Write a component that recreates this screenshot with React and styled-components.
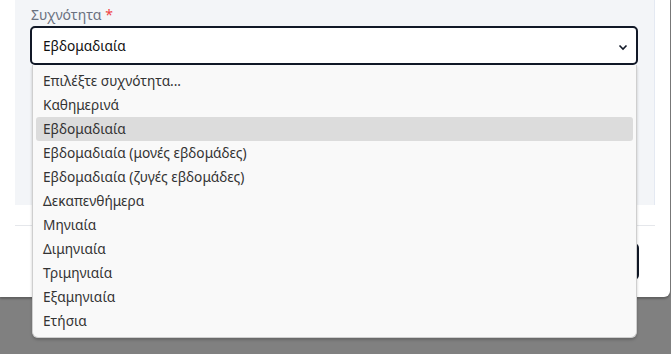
import React from 'react';
import styled, { createGlobalStyle } from 'styled-components';

const GlobalStyle = createGlobalStyle`
  html, body {
    margin: 0;
    padding: 0;
    background: #808080;
    font-family: "Noto Sans", "Open Sans", sans-serif;
  }
`;

const Page = styled.div`
  width: 671px;
  height: 354px;
  overflow: hidden;
  position: relative;
`;

const Modal = styled.div`
  width: 640px;
  height: 297px;
  padding: 0 15px;
  background: #ffffff;
  border-bottom-right-radius: 6px;
  box-shadow: 0 2px 2px rgba(0, 0, 0, 0.25);
  display: flex;
  flex-direction: column;
`;

const Panel = styled.div`
  height: 205px;
  box-sizing: border-box;
  background: #f3f5f8;
  border-right: 1px solid #e4e9f2;
  padding: 4px 16px 0 15px;
`;

const Label = styled.div`
  font-size: 14px;
  line-height: 22px;
  color: #6b7280;
  padding-left: 1px;
`;

const Required = styled.span`
  color: #ef4444;
`;

const Field = styled.div`
  position: relative;
`;

const SelectBox = styled.div`
  height: 39px;
  box-sizing: border-box;
  border: 2px solid #111827;
  border-radius: 5px;
  background: #ffffff;
  display: flex;
  align-items: center;
  justify-content: space-between;
  padding: 0 8px 0 11px;
  font-size: 13.7px;
  color: #111111;
`;

const Chevron = styled.svg`
  width: 10px;
  height: 10px;
  margin-top: 2px;
`;

const Dropdown = styled.ul`
  position: absolute;
  top: 39px;
  left: 2px;
  right: 1px;
  margin: 0;
  padding: 4px 3px 4px 3px;
  list-style: none;
  background: #f9f9f9;
  border: 1px solid #cfcfcf;
  border-top: none;
  border-radius: 0 0 6px 6px;
  box-shadow: 0 2px 3px rgba(0, 0, 0, 0.2);
  z-index: 2;
`;

const Option = styled.li`
  height: 24px;
  line-height: 24px;
  padding-left: 7px;
  font-size: 13.7px;
  color: #333333;
  border-radius: 3px;
  background: ${p => (p.$active ? '#dcdcdc' : 'transparent')};
`;

const Footer = styled.div`
  margin-top: 20px;
  border-top: 1px solid #e5e7eb;
  padding: 17px 16px 0 0;
  display: flex;
  justify-content: flex-end;
`;

const Button = styled.button`
  height: 37px;
  width: 120px;
  border: none;
  border-radius: 5px;
  background: #111827;
  color: #ffffff;
  font-family: inherit;
  font-size: 14px;
`;

const options = [
  'Επιλέξτε συχνότητα...',
  'Καθημερινά',
  'Εβδομαδιαία',
  'Εβδομαδιαία (μονές εβδομάδες)',
  'Εβδομαδιαία (ζυγές εβδομάδες)',
  'Δεκαπενθήμερα',
  'Μηνιαία',
  'Διμηνιαία',
  'Τριμηνιαία',
  'Εξαμηνιαία',
  'Ετήσια',
];

export default function App() {
  return (
    <>
      <GlobalStyle />
      <Page>
        <Modal>
          <Panel>
            <Label>
              Συχνότητα <Required>*</Required>
            </Label>
            <Field>
              <SelectBox>
                <span>Εβδομαδιαία</span>
                <Chevron viewBox="0 0 10 10">
                  <polyline points="1.5,3.5 5,7 8.5,3.5" fill="none" stroke="#111827" strokeWidth="1.6" />
                </Chevron>
              </SelectBox>
              <Dropdown>
                {options.map((o, i) => (
                  <Option key={i} $active={i === 2}>{o}</Option>
                ))}
              </Dropdown>
            </Field>
          </Panel>
          <Footer>
            <Button>Αποθήκευση</Button>
          </Footer>
        </Modal>
      </Page>
    </>
  );
}
